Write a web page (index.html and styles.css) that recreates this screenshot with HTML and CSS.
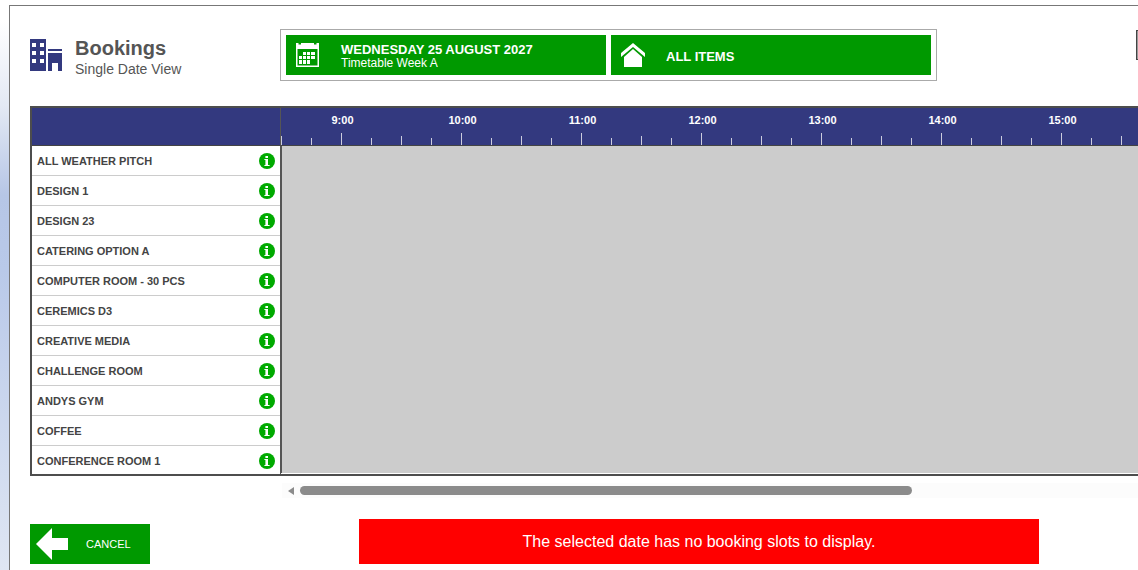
FILE: index.html
```html
<!DOCTYPE html>
<html lang="en">
<head>
<meta charset="utf-8">
<title>Bookings</title>
<link rel="stylesheet" href="styles.css">
</head>
<body>
<svg class="defs" aria-hidden="true">
  <symbol id="info" viewBox="0 0 16 16">
    <circle cx="8" cy="8" r="8" fill="#0a0"/>
    <path d="M7 3h2v2H7zM6 6h3v6h1v1H6v-1h1V7H6z" fill="#fff"/>
    <path d="M6 3h1v2H6zM6 7h1v5H6zM5 6h1v1H5zM5 12h1v1H5zM10 12h1v1h-1z" fill="#fff" opacity=".6"/>
  </symbol>
</svg>
<main class="page">
  <header class="header">
    <div class="heading">
      <svg class="heading-icon" viewBox="0 0 32 32" shape-rendering="crispEdges" aria-hidden="true">
        <path fill="#33397f" fill-rule="evenodd" d="M0 0h16v32H0zM2 4v4h4V4zM10 4v4h4V4zM2 12v4h4v-4zM10 12v4h4v-4zM2 20v4h4v-4zM10 20v4h4v-4zM18 10h14v2H18zM18 14h14v18h-4v-8h-6v8h-4z"/>
      </svg>
      <div>
        <h1 class="title">Bookings</h1>
        <p class="subtitle">Single Date View</p>
      </div>
    </div>
    <div class="filters">
      <button class="filter" type="button">
        <svg class="filter-icon" viewBox="0 0 24 24" aria-hidden="true">
          <path fill="#fff" fill-rule="evenodd" d="M0 0h2.5v1.5h2.5V0h13v1.5h2.500V0H23v24H0zM1.500 6v16.500h20V6z"/>
          <path fill="#fff" d="M7 9h3v3H7zM11 9h3v3h-3zM15 9h4v3h-4zM3 13h3v3H3zM7 13h3v3H7zM11 13h3v3h-3zM15 13h4v3h-4zM3 17h3v4H3zM7 17h3v4H7zM11 17h3v4h-3z"/>
        </svg>
        <span class="filter-text"><strong>WEDNESDAY 25 AUGUST 2027</strong><span>Timetable Week A</span></span>
      </button>
      <button class="filter" type="button">
        <svg class="filter-icon" viewBox="0 0 24 24" aria-hidden="true">
          <path fill="#fff" d="M12 0l12 10v4L12 4 0 14v-4zM12 6l9 8v10H3V14z"/>
        </svg>
        <span class="filter-text"><strong>ALL ITEMS</strong></span>
      </button>
    </div>
    <button class="tool" type="button" aria-label="Options"></button>
  </header>

  <section class="board">
    <div class="rooms">
      <div class="corner"></div>
      <ul class="room-list" id="rooms"></ul>
    </div>
    <div class="schedule">
      <div class="hours" id="hours"></div>
      <div class="slots"></div>
    </div>
  </section>

  <div class="scrollbar">
    <svg class="scroll-arrow" viewBox="0 0 6 8" aria-hidden="true"><path d="M0 4l6-4v8z" fill="#8b8b8b"/></svg>
    <div class="thumb"></div>
  </div>

  <footer class="footer">
    <button class="cancel" type="button">
      <svg class="cancel-icon" viewBox="0 0 32 32" aria-hidden="true"><path fill="#fff" d="M0 16L16 0v10h16v12H16v10z"/></svg>
      <span>CANCEL</span>
    </button>
    <p class="notice" role="alert">The selected date has no booking slots to display.</p>
  </footer>
</main>
<script src="script.js"></script>
</body>
</html>
```
FILE: styles.css
```css
* { box-sizing: border-box; }

body {
  margin: 0;
  min-height: 100vh;
  padding: 5px 0 0 9px;
  overflow: hidden;
  font-family: "Liberation Sans", Arial, sans-serif;
  color: #444;
  background: linear-gradient(#fff 0, #fff 20px, #e3e9f4 105px, #b6c6e6 195px, #b9c9e9 270px, #dfe6f3 570px);
}

h1, p, ul { margin: 0; padding: 0; }

button {
  border: 0;
  padding: 0;
  font-family: inherit;
  color: #fff;
  background: #090;
  cursor: pointer;
}

.defs { position: absolute; width: 0; height: 0; }

.page {
  min-height: calc(100vh - 5px);
  padding: 23px 0 0 20px;
  border: 1px solid #777;
  border-width: 1px 0 0 1px;
  background: #fff;
  overflow: hidden;
}

.header {
  display: flex;
  align-items: flex-start;
  margin-bottom: 25px;
}

.heading {
  flex: none;
  display: flex;
  gap: 13px;
  width: 250px;
  padding-top: 8px;
}

.heading-icon { width: 32px; height: 32px; margin-top: 2px; }
.title { font-size: 20px; line-height: 22px; color: #555; }
.subtitle { font-size: 14px; line-height: 20px; color: #555; }

.filters {
  flex: none;
  display: flex;
  gap: 5px;
  padding: 5px;
  border: 1px solid #aaa;
}

.filter {
  display: flex;
  align-items: center;
  gap: 21px;
  width: 320px;
  height: 40px;
  padding-left: 10px;
  text-align: left;
}

.filter-icon { flex: none; width: 24px; height: 24px; }
.filter-text { display: grid; padding-top: 3px; font-size: 12px; line-height: 13px; }
.filter-text strong { font-size: 13px; line-height: 14px; }

.tool {
  flex: none;
  width: 30px;
  height: 30px;
  margin: 1px 0 0 199px;
  border: 1px solid #444;
  background: #999;
}

.board {
  display: flex;
  border: 2px solid #4d4d4d;
  border-right: 0;
}

.rooms { flex: none; width: 249px; }

.corner {
  height: 38px;
  border-right: 1px solid #555;
  border-bottom: 1px solid #444;
  background: #33397f;
}

.room-list {
  height: 328px;
  overflow: hidden;
  list-style: none;
  border-right: 1px solid #555;
}

.room {
  display: flex;
  align-items: center;
  justify-content: space-between;
  height: 30px;
  padding: 0 5px;
  border-bottom: 1px solid #ccc;
  font-size: 11px;
  font-weight: bold;
}

.info { width: 16px; height: 16px; background: none; }
.info svg { display: block; width: 16px; height: 16px; }

.schedule {
  flex: 1;
  min-width: 0;
  display: flex;
  flex-direction: column;
}

.hours {
  display: flex;
  height: 38px;
  overflow: hidden;
  border-bottom: 1px solid #444;
  background: #33397f;
}

.hour {
  flex: none;
  display: grid;
  grid-template-columns: repeat(4, 30px);
  grid-template-rows: 25px 12px;
  align-items: end;
}

.hour-label {
  grid-column: 1 / -1;
  align-self: start;
  padding: 5px 0 0 3px;
  line-height: 14px;
  text-align: center;
  font-size: 11px;
  font-weight: bold;
  color: #fff;
}

.tick { width: 1px; height: 7px; background: #ccd; }
.tick-half { height: 9px; }
.tick-hour { height: 12px; }

.slots {
  flex: 1;
  margin-bottom: 1px;
  border-left: 1px solid #555;
  background: #ccc;
}

.scrollbar {
  display: flex;
  align-items: center;
  gap: 6px;
  height: 15px;
  margin: 7px 0 0 252px;
  padding-left: 6px;
  background: #fcfcfc;
}

.scroll-arrow { flex: none; width: 6px; height: 8px; }
.thumb { width: 72%; height: 9px; border-radius: 5px; background: #8b8b8b; }

.footer {
  display: flex;
  align-items: flex-end;
  gap: 209px;
  margin-top: 21px;
}

.cancel {
  flex: none;
  display: flex;
  align-items: center;
  gap: 18px;
  width: 120px;
  height: 40px;
  padding-left: 6px;
  font-size: 11px;
}

.cancel-icon { width: 32px; height: 32px; }

.notice {
  flex: 0 1 680px;
  text-align: center;
  font-size: 16px;
  line-height: 45px;
  color: #fff;
  background: #f00;
}
```
FILE: script.js
```js
const rooms = [
  "ALL WEATHER PITCH", "DESIGN 1", "DESIGN 23", "CATERING OPTION A",
  "COMPUTER ROOM - 30 PCS", "CEREMICS D3", "CREATIVE MEDIA",
  "CHALLENGE ROOM", "ANDYS GYM", "COFFEE", "CONFERENCE ROOM 1"
];

document.getElementById("rooms").innerHTML = rooms.map(name =>
  `<li class="room"><span>${name}</span><button class="info" type="button" aria-label="About ${name}"><svg><use href="#info"/></svg></button></li>`
).join("");

// Each block runs from half past to half past, centred on its hour.
const ticks = `<i class="tick tick-half"></i><i class="tick"></i><i class="tick tick-hour"></i><i class="tick"></i>`;
let blocks = "";
for (let h = 9; h <= 15; h++) {
  blocks += `<div class="hour"><span class="hour-label">${h}:00</span>${ticks}</div>`;
}
blocks += `<div class="hour"><span class="hour-label"></span>${ticks}</div>`;
document.getElementById("hours").innerHTML = blocks;
```
